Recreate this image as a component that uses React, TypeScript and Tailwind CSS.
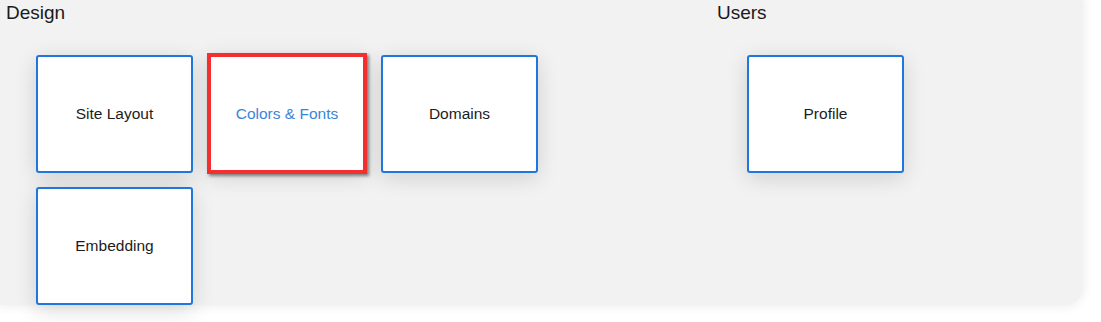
const font = { fontFamily: '"Liberation Sans", Arial, sans-serif' };

function Tile({ label, active = false }: { label: string; active?: boolean }) {
  if (active) {
    return (
      <div className="flex h-[121px] w-[160px] items-center justify-center border-4 border-[#f3302f] bg-white shadow-[2px_2px_3px_rgba(0,0,0,0.45),0_4px_20px_rgba(0,0,0,0.12)]">
        <span className="text-[15.5px] text-[#3b84d6]">{label}</span>
      </div>
    );
  }
  return (
    <div className="flex h-[118px] w-[157px] items-center justify-center rounded-[3px] border-2 border-[#1f76dc] bg-white shadow-[0_5px_22px_rgba(0,0,0,0.14)]">
      <span className="text-[15.5px] text-[#1c1c1c]">{label}</span>
    </div>
  );
}

function Section({ title, rows, width }: { title: string; rows: { label: string; active?: boolean }[][]; width: string }) {
  return (
    <div className={`flex flex-col ${width}`}>
      <h2 className="pt-[2px] text-[19px] leading-[22px] text-[#1a1a1a]">{title}</h2>
      <div className="mt-[29px] flex flex-col gap-[11.5px] pl-[30px]">
        {rows.map((row, i) => (
          <div key={i} className="flex h-[121px] items-center gap-[14px]">
            {row.map((t) => (
              <Tile key={t.label} label={t.label} active={t.active} />
            ))}
          </div>
        ))}
      </div>
    </div>
  );
}

export default function App() {
  return (
    <div className="h-[322px] w-[1101px] overflow-hidden bg-white" style={font}>
      <div className="flex h-[305px] w-[1083px] rounded-br-[18px] bg-[#f2f2f2] pl-[6px] shadow-[0_0_8px_3px_#f2f2f2]">
        <Section
          title="Design"
          width="w-[711px]"
          rows={[
            [{ label: 'Site Layout' }, { label: 'Colors & Fonts', active: true }, { label: 'Domains' }],
            [{ label: 'Embedding' }],
          ]}
        />
        <Section title="Users" width="w-[300px]" rows={[[{ label: 'Profile' }]]} />
      </div>
    </div>
  );
}
